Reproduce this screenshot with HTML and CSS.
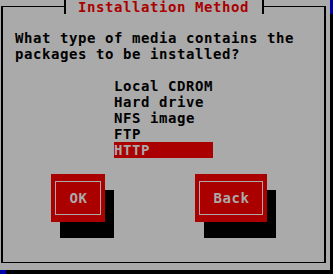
FILE: index.html
```html
<!DOCTYPE html>
<html lang="en">
<head>
    <meta charset="UTF-8">
    <title>Installation Method</title>
    <link rel="stylesheet" href="styles.css">
</head>
<body>
    <div class="screen">
        <div class="window">
            <div class="frame">
                <div class="title">Installation Method</div>

                <p class="prompt">What type of media contains the<br>packages to be installed?</p>

                <ul class="listbox">
                    <li>Local CDROM</li>
                    <li>Hard drive</li>
                    <li>NFS image</li>
                    <li>FTP</li>
                    <li class="selected">HTTP</li>
                </ul>

                <div class="buttons">
                    <div class="btn btn-ok"><span class="btn-inner">OK</span></div>
                    <div class="btn btn-back"><span class="btn-inner">Back</span></div>
                </div>
            </div>
        </div>
    </div>
</body>
</html>
```

FILE: styles.css
```css
body {
    margin: 0;
    width: 333px;
    height: 274px;
    overflow: hidden;
    background: #0000aa;
    font-family: 'DejaVu Sans Mono', 'Liberation Mono', monospace;
    font-weight: bold;
    font-size: 14px;
    letter-spacing: 0.57px;
    line-height: 16px;
    color: #000;
}

.screen {
    position: relative;
    width: 333px;
    height: 274px;
}

/* window sits on the text screen, cell grid is 9x16 */
.window {
    position: absolute;
    left: -3px;
    top: -2px;
    width: 333px;
    height: 272px;
    background: #aaaaaa;
    box-shadow: 9px 16px 0 #000;
    box-sizing: border-box;
    padding: 8px 4px 7px 4px;
}

.frame {
    position: relative;
    height: 100%;
    box-sizing: border-box;
    border-left: 2px solid #000;
    border-right: 2px solid #000;
    border-top: 1px solid #000;
    border-bottom: 1px solid #000;
    padding: 23px 0 0 12px;
}

.title {
    position: absolute;
    left: 61px;
    top: -9px;
    width: 200px;
    height: 16px;
    box-sizing: border-box;
    padding-left: 12px;
    line-height: 19px;
    border-left: 2px solid #000;
    border-right: 2px solid #000;
    background: #aaaaaa;
    color: #aa0000;
    white-space: nowrap;
}

.prompt {
    margin: 0;
    white-space: nowrap;
}

.listbox {
    list-style: none;
    margin: 16px 0 0 99px;
    padding: 0;
    width: 99px;
}

.listbox li {
    height: 16px;
    white-space: nowrap;
}

.listbox .selected {
    background: #aa0000;
    color: #aaaaaa;
}

.buttons {
    display: flex;
    gap: 90px;
    margin: 16px 0 0 36px;
}

.btn {
    height: 48px;
    box-sizing: border-box;
    padding: 7px 4px 7px 4px;
    background: #aa0000;
    box-shadow: 9px 16px 0 #000;
    display: flex;
}

.btn-ok {
    width: 54px;
}

.btn-back {
    width: 72px;
}

.btn-inner {
    flex: 1;
    display: flex;
    align-items: center;
    justify-content: center;
    border: 1px solid #aaaaaa;
    color: #aaaaaa;
    padding-left: 1px;
}
```
